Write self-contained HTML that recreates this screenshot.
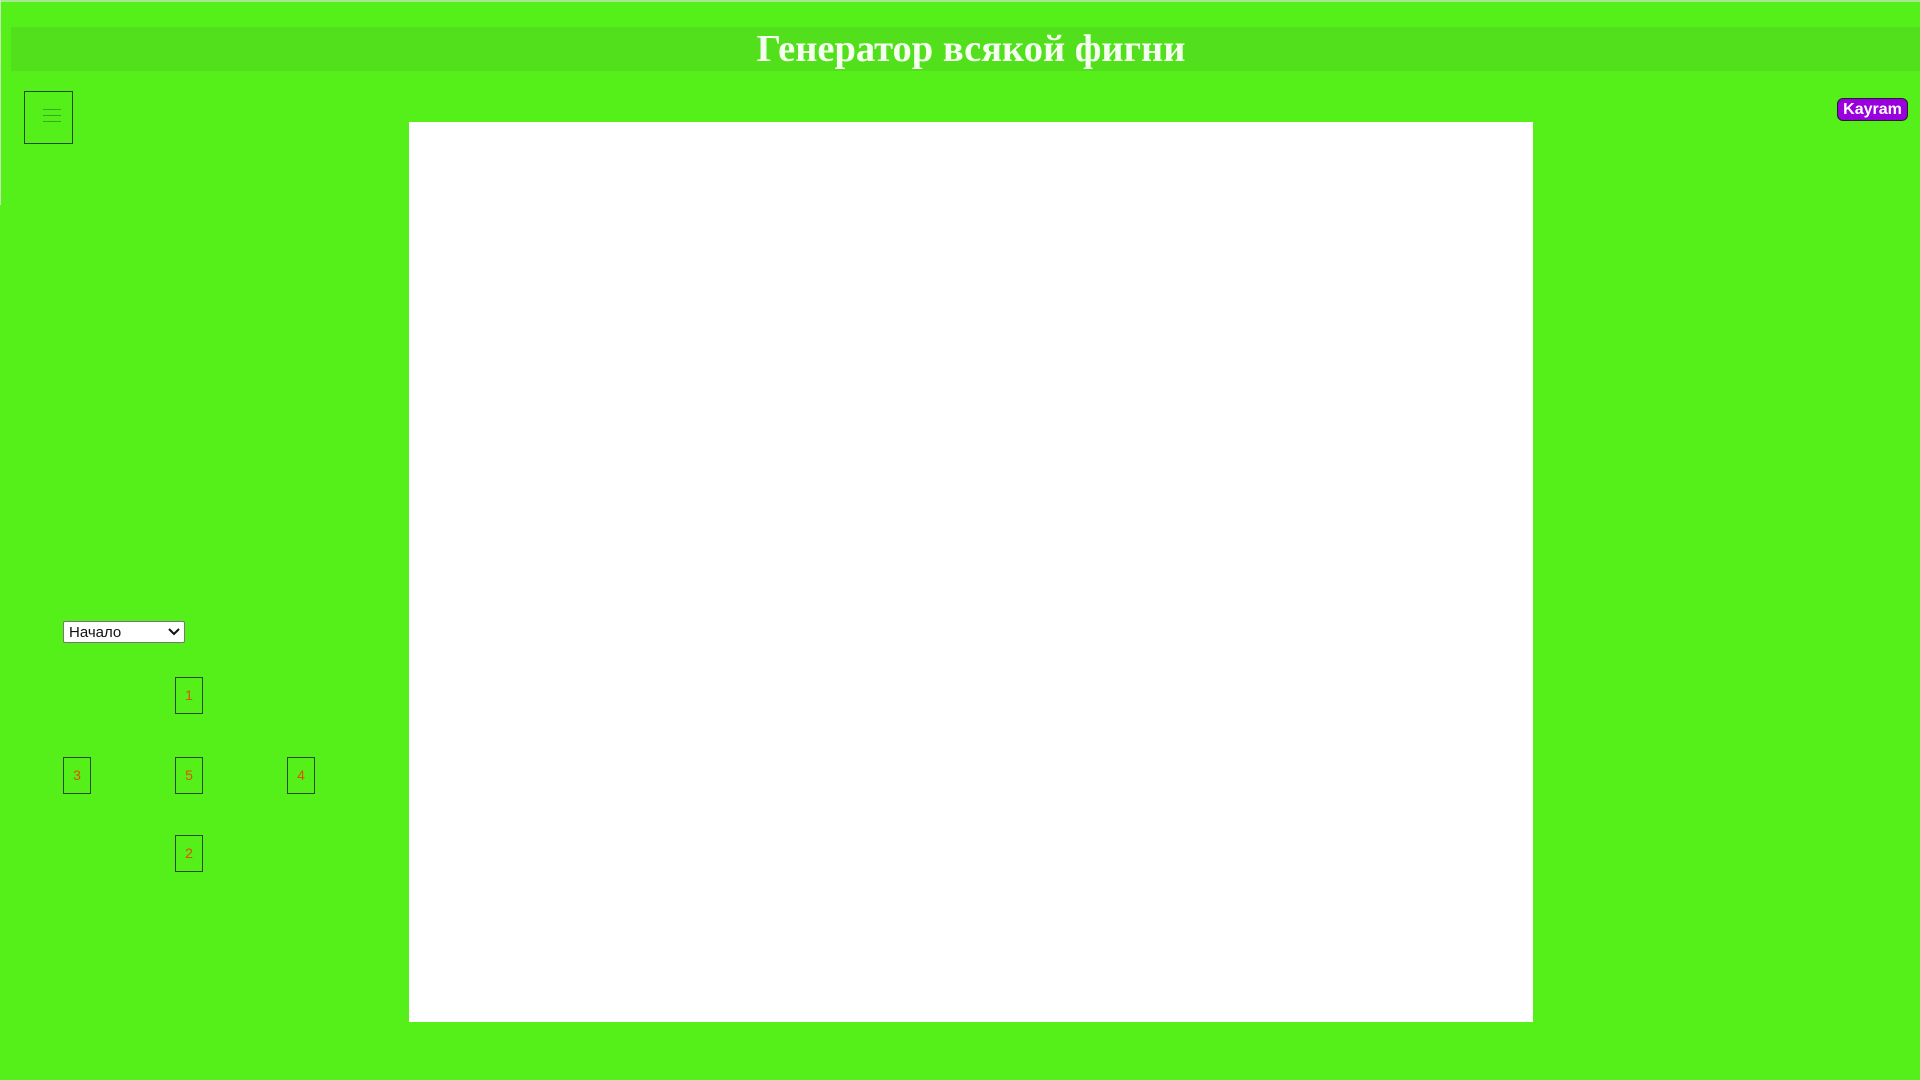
<!DOCTYPE html>
<html><head><meta charset="utf-8"><style>
html,body{margin:0;padding:0;width:1920px;height:1080px;overflow:hidden;background:#55f01a;position:relative;font-family:"Liberation Sans",sans-serif}
.edge{position:absolute;left:0;top:0;width:1px;height:205px;background:#c8e8b8}
.top{position:absolute;left:0;top:0;width:1920px;height:2px;background:#a8e890}
.hdr{position:absolute;left:11px;top:27px;width:1909px;height:44px;background:#52e01c}
.hdr h1{margin:0;text-align:center;font:bold 38.5px/44px "Liberation Serif",serif;color:#f4fff0;position:absolute;left:-11px;width:1942px}
.menu{position:absolute;left:24px;top:91px;width:47px;height:51px;border:1px solid #1e4a20}
.menu i{position:absolute;left:18px;width:18px;height:1px;background:#3aa81a}
.canvas{position:absolute;left:409px;top:122px;width:1124px;height:900px;background:#fff}
.k{position:absolute;left:1837px;top:98px;width:71px;height:23px;background:#9900dd;border:1px solid #222;border-radius:6px;color:#fff;font:bold 16px/22px "Liberation Sans",sans-serif;text-align:center;box-sizing:border-box}
.sel{position:absolute;left:63px;top:621px;width:122px;height:22px;background:#fff;border:1px solid #777;border-radius:2px;font-size:15px;line-height:21px;padding-left:5px;box-sizing:border-box;color:#111}
.sel svg{position:absolute;right:4px;top:6px}
.b{position:absolute;border:1px solid #2a4a20;color:#e05000;font-size:14px;text-align:center;line-height:35px;box-sizing:border-box;width:28px;height:37px}
</style></head><body>
<div class="top"></div><div class="edge"></div>
<div class="hdr"><h1>Генератор всякой фигни</h1></div>
<div class="menu"><i style="top:17px"></i><i style="top:23px"></i><i style="top:29px"></i></div>
<div class="canvas"></div>
<div class="k">Kayram</div>
<div class="sel">Начало<svg width="12" height="8" viewBox="0 0 12 8"><path d="M1 1l5 5 5-5" stroke="#111" stroke-width="2" fill="none"/></svg></div>
<div class="b" style="left:175px;top:677px">1</div>
<div class="b" style="left:63px;top:757px">3</div>
<div class="b" style="left:175px;top:757px">5</div>
<div class="b" style="left:287px;top:757px">4</div>
<div class="b" style="left:175px;top:835px">2</div>
</body></html>
